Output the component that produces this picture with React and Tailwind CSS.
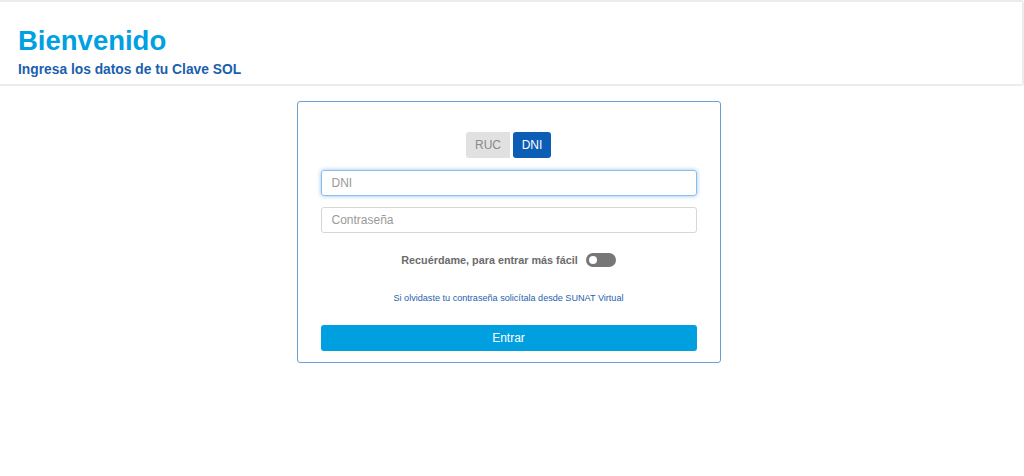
export default function App() {
    return (
        <div className="min-h-[476px] bg-white" style={{ fontFamily: '"Liberation Sans", Arial, sans-serif' }}>
            {/* Header */}
            <header className="h-[86px] border-t-2 border-r-2 border-b-2 border-[#ececec] rounded-tr-[3px] rounded-br-[3px] px-[18px] pt-[23px]">
                <h1 className="text-[27.5px] leading-[32px] font-bold text-[#01a0e2]">Bienvenido</h1>
                <p className="mt-[5px] text-[13.8px] leading-[16px] font-bold text-[#1a5fae]">Ingresa los datos de tu Clave SOL</p>
            </header>

            {/* Login card */}
            <div className="flex justify-center pt-[15px] pr-[7px]">
                <div className="w-[424px] border border-[#6a9fd4] rounded-[3px] px-[23px] pt-[30px] pb-[11px]">
                    <div className="flex justify-center gap-[3px]">
                        <button className="w-[44px] h-[26px] rounded-l-[3px] bg-[#e1e1e1] text-[12px] text-[#8a8a8a]">RUC</button>
                        <button className="w-[38px] h-[26px] rounded-[3px] bg-[#0b5db5] text-[12px] text-white">DNI</button>
                    </div>

                    <input
                        className="mt-[12px] block w-full h-[26px] rounded-[3px] border border-[#8cbdf0] px-[10px] text-[12px] outline-none shadow-[0_0_4px_rgba(80,150,230,0.6)] placeholder:text-[#9a9a9a]"
                        placeholder="DNI"
                    />
                    <input
                        className="mt-[11px] block w-full h-[26px] rounded-[3px] border border-[#d6d6d6] px-[10px] text-[12px] outline-none placeholder:text-[#9a9a9a]"
                        placeholder="Contraseña"
                    />

                    <div className="mt-[19px] flex items-center justify-center gap-[8px]">
                        <span className="text-[10.8px] font-bold text-[#6b6b6b]">Recuérdame, para entrar más fácil</span>
                        <span className="relative w-[30px] h-[14px] rounded-full bg-[#777]">
                            <span className="absolute left-[3px] top-[3px] w-[8px] h-[8px] rounded-full bg-white"></span>
                        </span>
                    </div>

                    <p className="mt-[24px] text-center text-[9.1px] text-[#1f5fae]">Si olvidaste tu contraseña solicítala desde SUNAT Virtual</p>

                    <button className="mt-[19px] block w-full h-[26px] rounded-[3px] bg-[#00a0e0] text-[12px] text-white">Entrar</button>
                </div>
            </div>
        </div>
    );
}
